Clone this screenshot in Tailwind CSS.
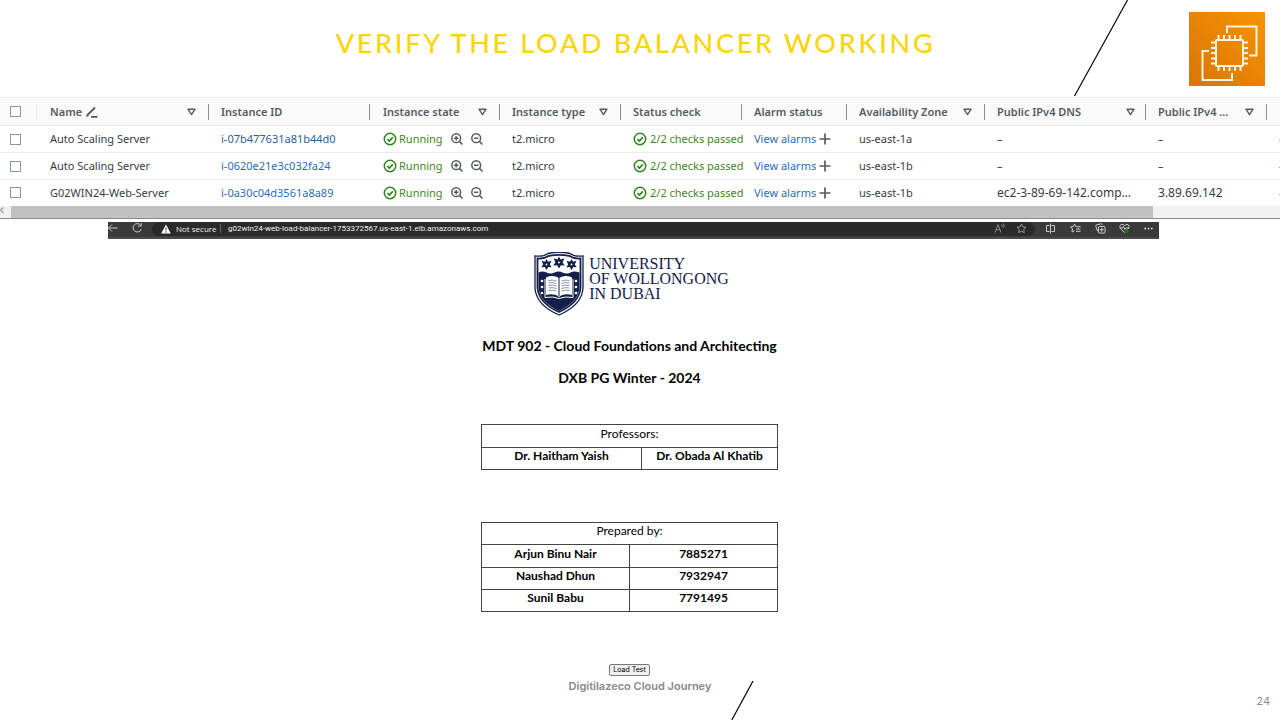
<!DOCTYPE html>
<html lang="en">
<head>
<meta charset="utf-8">
<meta name="viewport" content="width=device-width, initial-scale=1">
<title>Verify the load balancer working</title>
<script src="https://cdn.jsdelivr.net/npm/@tailwindcss/browser@4"></script>
</head>
<body class="relative flex min-h-screen flex-col overflow-x-hidden bg-white font-['Lato',sans-serif] text-black">

<svg width="0" height="0" class="absolute" aria-hidden="true">
  <defs>
    <symbol id="ok" viewBox="0 0 14 14"><circle cx="7" cy="7" r="5.7" fill="none" stroke="#2b8518" stroke-width="1.5"/><path d="M4.4 7.1l2 1.9 3.4-3.6" fill="none" stroke="#2b8518" stroke-width="1.6"/></symbol>
    <symbol id="zin" viewBox="0 0 12 12"><circle cx="5.2" cy="5.2" r="4.4" fill="none" stroke="#545b64" stroke-width="1.5"/><path d="M8.4 8.4l3.1 3.1M3 5.2h4.4M5.2 3v4.4" stroke="#545b64" stroke-width="1.5"/></symbol>
    <symbol id="zout" viewBox="0 0 12 12"><circle cx="5.2" cy="5.2" r="4.4" fill="none" stroke="#545b64" stroke-width="1.5"/><path d="M8.4 8.4l3.1 3.1M3 5.2h4.4" stroke="#545b64" stroke-width="1.5"/></symbol>
    <symbol id="plus" viewBox="0 0 12 12"><path d="M6 .5v11M.5 6h11" stroke="#545b64" stroke-width="1.7"/></symbol>
    <symbol id="tri" viewBox="0 0 9 8"><path d="M1 1.2h7L4.500 6.600z" fill="none" stroke="#545b64" stroke-width="1.4" stroke-linejoin="round"/></symbol>
    <symbol id="leaf" viewBox="-5 -5 10 10"><path d="M0-5l1.300 2.400L4.500-3.500 3 0l1.800 2.500-3.200-.2L0 5l-1.600-2.700-3.200.2L-3 0l-1.500-3.500 3.200.9z" fill="#14204a"/><circle r=".8" fill="#fff"/></symbol>
  </defs>
</svg>

<header class="grid h-[97px] grid-cols-[1fr_auto_1fr] items-start pr-[9px] pt-3">
  <span></span>
  <h1 class="pt-[13px] text-[27px] leading-9 font-medium tracking-widest text-[#fbd50b]">VERIFY THE LOAD BALANCER WORKING</h1>
  <svg class="mr-[6px] h-[74px] w-[76px] justify-self-end" viewBox="0 0 76 74" role="img" aria-label="Amazon EC2">
    <defs><linearGradient id="og" x1="0" y1="1" x2="1" y2="0"><stop offset="0" stop-color="#d87508"/><stop offset="1" stop-color="#f79400"/></linearGradient></defs>
    <rect width="76" height="74" fill="url(#og)"/>
    <g fill="none" stroke="#fff3df" stroke-width="2">
      <rect x="27" y="28" width="27" height="26" rx="1"/>
      <path d="M29.500 28v-5M35 28v-5M40.500 28v-5M46 28v-5M51.500 28v-5M29.500 54v5M35 54v5M40.500 54v5M46 54v5M51.500 54v5M27 30.500h-5M27 36h-5M27 41h-5M27 46.500h-5M27 51.500h-5M54 30.500h5M54 36h5M54 41h5M54 46.500h5M54 51.500h5"/>
      <path d="M38 21v-6.500h29.500V43.500H60M20 39h-6.500v29H43V61"/>
    </g>
  </svg>
</header>
<svg class="absolute left-[1074px] top-0 h-24 w-[54px]" viewBox="0 0 54 96" aria-hidden="true"><path d="M53.500 0L.5 96" stroke="#000" stroke-width="1.200"/></svg>

<section class="overflow-hidden border-b border-[#8a8a8a]">
  <table class="w-full table-fixed border-collapse text-left text-[11px] leading-4 text-[#363c44] font-['Noto_Sans',sans-serif]">
    <colgroup>
      <col class="w-[37px]"><col class="w-[172px]"><col class="w-[161px]"><col class="w-[130px]"><col class="w-[121px]"><col class="w-[121px]"><col class="w-[105px]"><col class="w-[138px]"><col class="w-[161px]"><col class="w-[121px]"><col>
    </colgroup>
    <thead>
      <tr class="h-7 border-y border-[#eaeded] bg-[#fafafa] text-[#545b64]">
        <th class="p-0"><div class="flex h-4 items-center border-r border-[#eaeded] pl-[10px]"><input type="checkbox" aria-label="Select all" class="size-[11px] appearance-none border border-[#8d959d] bg-white"></div></th>
        <th class="p-0 font-semibold"><div class="flex h-4 items-center border-r border-[#8a9096] pl-[13px] pr-3">Name<svg class="ml-1 size-3" viewBox="0 0 12 12"><path d="M1 9.500L9 1.500M5 10.800h6.500" stroke="#545b64" stroke-width="1.800"/><path d="M0 11l1-3 2 2z" fill="#545b64"/></svg><svg class="ml-auto h-2 w-[9px]"><use href="#tri"/></svg></div></th>
        <th class="p-0 font-semibold"><div class="flex h-4 items-center border-r border-[#8a9096] pl-3">Instance ID</div></th>
        <th class="p-0 font-semibold"><div class="flex h-4 items-center justify-between border-r border-[#8a9096] pl-[13px] pr-3">Instance state<svg class="h-2 w-[9px]"><use href="#tri"/></svg></div></th>
        <th class="p-0 font-semibold"><div class="flex h-4 items-center justify-between border-r border-[#8a9096] pl-3 pr-3">Instance type<svg class="h-2 w-[9px]"><use href="#tri"/></svg></div></th>
        <th class="p-0 font-semibold"><div class="flex h-4 items-center border-r border-[#8a9096] pl-3">Status check</div></th>
        <th class="p-0 font-semibold"><div class="flex h-4 items-center border-r border-[#8a9096] pl-3">Alarm status</div></th>
        <th class="p-0 font-semibold"><div class="flex h-4 items-center justify-between whitespace-nowrap border-r border-[#8a9096] pl-3 pr-3">Availability Zone<svg class="h-2 w-[9px]"><use href="#tri"/></svg></div></th>
        <th class="p-0 font-semibold"><div class="flex h-4 items-center justify-between border-r border-[#8a9096] pl-3 pr-[10px]">Public IPv4 DNS<svg class="h-2 w-[9px]"><use href="#tri"/></svg></div></th>
        <th class="p-0 font-semibold"><div class="flex h-4 items-center justify-between border-r border-[#8a9096] pl-3 pr-3">Public IPv4 ...<svg class="h-2 w-[9px]"><use href="#tri"/></svg></div></th>
        <th class="p-0"></th>
      </tr>
    </thead>
    <tbody>
      <tr class="h-[27px] border-b border-[#eaeded]">
        <td class="p-0 pl-[10px]"><input type="checkbox" aria-label="Select i-07b477631a81b44d0" class="block size-[11px] appearance-none border border-[#8d959d]"></td>
        <td class="p-0 pl-[13px]">Auto Scaling Server</td>
        <td class="p-0 pl-3"><a href="#" class="text-[#2a5f94]">i-07b477631a81b44d0</a></td>
        <td class="p-0 pl-[13px]"><div class="flex items-center text-[#3f8624]"><svg class="mr-0.5 size-[14px]"><use href="#ok"/></svg><span class="w-[52px]">Running</span><button type="button" aria-label="Filter in" class="mr-2"><svg class="block size-3"><use href="#zin"/></svg></button><button type="button" aria-label="Filter out"><svg class="block size-3"><use href="#zout"/></svg></button></div></td>
        <td class="p-0 pl-3">t2.micro</td>
        <td class="p-0 pl-3"><div class="flex items-center whitespace-nowrap text-[#3f8624]"><svg class="mr-[3px] size-[14px] shrink-0"><use href="#ok"/></svg>2/2 checks passed</div></td>
        <td class="p-0 pl-3"><div class="flex items-center whitespace-nowrap"><a href="#" class="mr-[3px] text-[#2b6cb5]">View alarms</a><button type="button" aria-label="Create alarm"><svg class="block size-3"><use href="#plus"/></svg></button></div></td>
        <td class="p-0 pl-3">us-east-1a</td><td class="p-0 pl-3">–</td><td class="p-0 pl-3">–</td><td class="overflow-hidden p-0 pl-3">–</td>
      </tr>
      <tr class="h-[27px] border-b border-[#eaeded]">
        <td class="p-0 pl-[10px]"><input type="checkbox" aria-label="Select i-0620e21e3c032fa24" class="block size-[11px] appearance-none border border-[#8d959d]"></td>
        <td class="p-0 pl-[13px]">Auto Scaling Server</td>
        <td class="p-0 pl-3"><a href="#" class="text-[#2b6cb5]">i-0620e21e3c032fa24</a></td>
        <td class="p-0 pl-[13px]"><div class="flex items-center text-[#3f8624]"><svg class="mr-0.5 size-[14px]"><use href="#ok"/></svg><span class="w-[52px]">Running</span><button type="button" aria-label="Filter in" class="mr-2"><svg class="block size-3"><use href="#zin"/></svg></button><button type="button" aria-label="Filter out"><svg class="block size-3"><use href="#zout"/></svg></button></div></td>
        <td class="p-0 pl-3">t2.micro</td>
        <td class="p-0 pl-3"><div class="flex items-center whitespace-nowrap text-[#3f8624]"><svg class="mr-[3px] size-[14px] shrink-0"><use href="#ok"/></svg>2/2 checks passed</div></td>
        <td class="p-0 pl-3"><div class="flex items-center whitespace-nowrap"><a href="#" class="mr-[3px] text-[#2b6cb5]">View alarms</a><button type="button" aria-label="Create alarm"><svg class="block size-3"><use href="#plus"/></svg></button></div></td>
        <td class="p-0 pl-3">us-east-1b</td><td class="p-0 pl-3">–</td><td class="p-0 pl-3">–</td><td class="overflow-hidden p-0 pl-3">–</td>
      </tr>
      <tr class="h-[26px]">
        <td class="p-0 pl-[10px]"><input type="checkbox" aria-label="Select i-0a30c04d3561a8a89" class="block size-[11px] appearance-none border border-[#8d959d]"></td>
        <td class="p-0 pl-[13px]">G02WIN24-Web-Server</td>
        <td class="p-0 pl-3"><a href="#" class="text-[#2b6cb5]">i-0a30c04d3561a8a89</a></td>
        <td class="p-0 pl-[13px]"><div class="flex items-center text-[#3f8624]"><svg class="mr-0.5 size-[14px]"><use href="#ok"/></svg><span class="w-[52px]">Running</span><button type="button" aria-label="Filter in" class="mr-2"><svg class="block size-3"><use href="#zin"/></svg></button><button type="button" aria-label="Filter out"><svg class="block size-3"><use href="#zout"/></svg></button></div></td>
        <td class="p-0 pl-3">t2.micro</td>
        <td class="p-0 pl-3"><div class="flex items-center whitespace-nowrap text-[#3f8624]"><svg class="mr-[3px] size-[14px] shrink-0"><use href="#ok"/></svg>2/2 checks passed</div></td>
        <td class="p-0 pl-3"><div class="flex items-center whitespace-nowrap"><a href="#" class="mr-[3px] text-[#2b6cb5]">View alarms</a><button type="button" aria-label="Create alarm"><svg class="block size-3"><use href="#plus"/></svg></button></div></td>
        <td class="p-0 pl-3">us-east-1b</td><td class="whitespace-nowrap p-0 pl-3 text-[12px]">ec2-3-89-69-142.comp…</td><td class="p-0 pl-3 text-[12px]">3.89.69.142</td><td class="overflow-hidden p-0 pl-3">–</td>
      </tr>
    </tbody>
  </table>
  <div class="flex h-3 bg-[#f1f1f1]">
    <svg class="h-[10px] w-[11px]" viewBox="0 0 11 10"><path d="M3.500 1.500L.5 4.200l3 2.800" fill="none" stroke="#9a9a9a" stroke-width="1.300"/></svg>
    <div class="mr-[127px] flex-1 bg-[#c1c1c1]"></div>
  </div>
</section>

<nav class="ml-[108px] mr-[121px] mt-[3px] flex h-[17px] items-start border-b-2 border-[#4a4a4a] bg-[#3a3a3a] text-[8px] leading-3 text-[#f1f1f1]">
  <button type="button" aria-label="Back"><svg class="block h-[13px] w-[10px]" viewBox="0 0 10 13" fill="none" stroke="#c8c8c8"><path d="M9.500 6H.8M4 2.500L.5 6 4 9.500"/></svg></button>
  <button type="button" aria-label="Reload" class="ml-[13px]"><svg class="block h-[13px] w-3" viewBox="0 0 12 13" fill="none" stroke="#c8c8c8"><path d="M9.800 3.500A4.200 4.200 0 1 0 10.300 7M10.200 1v3H7"/></svg></button>
  <div class="ml-[9px] flex h-[14px] flex-1 items-center rounded-full bg-[#2a2a2a] pl-[9px] pr-2">
    <svg class="mr-[5px] size-[10px]" viewBox="0 0 10 10"><path d="M5 .5L9.800 9.500H.2z" fill="#fff"/><path d="M5 3.500v3M5 7.300v1.200" stroke="#2a2a2a"/></svg>
    <span class="w-11 font-['Open_Sans',sans-serif]">Not secure</span><span class="mr-[7px] h-[9px] w-px bg-[#666]"></span><span class="font-['Roboto',sans-serif]">g02win24-web-load-balancer-1753372567.us-east-1.elb.amazonaws.com</span>
    <svg class="ml-auto h-[11px] w-[11px]" viewBox="0 0 11 11" fill="none" stroke="#888"><path d="M1 9.500L4 1.500 7 9.500M2 6.700h4M7.500 1.500q1 1 .6 2.500M9.200.5q1.400 1.700.6 4"/></svg>
    <svg class="ml-[11px] h-[11px] w-[11px]" viewBox="0 0 11 11" fill="none" stroke="#999"><path d="M5.500 1l1.400 2.900 3.100.4-2.300 2.200.6 3.200-2.800-1.600-2.800 1.600.6-3.200L1 4.300l3.100-.4z"/></svg>
  </div>
  <div class="flex items-center pl-[10px] pr-[6px] pt-px">
    <svg class="mr-[14px] size-[11px]" viewBox="0 0 11 11" fill="none" stroke="#ccc"><path d="M4.500 2.500H1.500v6h3M6.500 2.500h3v6h-3M5.500.5v10"/></svg>
    <svg class="mr-[14px] size-[11px]" viewBox="0 0 11 11" fill="none" stroke="#ccc"><path d="M6.500 3.500h-.8L4.500 1 3.300 3.500l-2.800.4 2 2-.5 3.100 2.500-1.300M6.500 3.700H10.500M6 6h4.500M6 8.300h4.500"/></svg>
    <svg class="mr-[13px] size-[11px]" viewBox="0 0 11 11" fill="none" stroke="#ccc"><rect x="3.500" y="3.500" width="6.500" height="6.500" rx="1"/><path d="M6.700 4.800v4M4.800 6.700h4M2.500 8L.8 3.200q-.2-1 .7-1.300L6 .8q1-.2 1.300.8"/></svg>
    <svg class="mr-[14px] size-[11px]" viewBox="0 0 11 11" fill="none" stroke="#ccc"><path d="M5.500 9.500L1.200 5.200Q0 3 2 1.500 4 .8 5.500 2.500 7 .8 9 1.500q2 1.500.8 3.700zM1.500 5h2l1-1.500L6 6.500 7 5h3"/><circle cx="7.500" cy="8" r="2" fill="#127a1d" stroke="none"/></svg>
    <svg class="size-[9px]" viewBox="0 0 9 9" fill="#ddd"><circle cx="1.200" cy="4.500" r=".9"/><circle cx="4.500" cy="4.500" r=".9"/><circle cx="7.800" cy="4.500" r=".9"/></svg>
  </div>
</nav>

<main class="flex flex-col items-center pr-[21px] pt-[13px]">
  <div class="flex items-start gap-[5px] pl-1">
    <svg class="h-16 w-[50px]" viewBox="0 0 50 64" aria-hidden="true">
      <path d="M1 4Q9 5 14 1.500 25-1 36 1.500 41 5 49 4V36Q48 53 25 63 2 53 1 36z" fill="#fff" stroke="#14204a" stroke-width="1.300"/>
      <path d="M3.500 6.500Q10 7 15 3.800 25 1.800 35 3.800 40 7 46.500 6.500V36Q45 51 25 60 5 51 3.500 36z" fill="#fff" stroke="#14204a" stroke-width="1.800"/>
      <path d="M4.500 20.500q4-2 8 0t8 0 8 0 8 0 9 0V36Q44 50 25 59 6 50 4.500 36z" fill="#14204a"/>
      <use href="#leaf" x="7" y="7" width="11" height="11"/><use href="#leaf" x="19" y="4.500" width="12" height="12"/><use href="#leaf" x="32" y="7" width="11" height="11"/>
      <path d="M12 25.500q7-3 13 .5 6-3.500 13-.5V43q-7-2-13 1.500Q19 41 12 43z" fill="#fff"/>
      <path d="M11 27v18.500q8-1.500 14 1 6-2.500 14-1V27M25 26v19" fill="none" stroke="#fff" stroke-width="1"/><path d="M25 26v18" stroke="#14204a"/>
      <path d="M14.500 28.500q4-1 8 .5m-8 2q4-1 8 .5m-8 2q4-1 8 .5m-8 2q4-1 8 .5m-8 2q4-1 8 .5M27.500 29q4-1.500 8-.5m-8 3q4-1.500 8-.5m-8 3q4-1.500 8-.5m-8 3q4-1.500 8-.5m-8 3q4-1.500 8-.5" fill="none" stroke="#8088a0" stroke-width=".9"/>
      <g fill="#fff"><circle cx="8" cy="29" r="1.300"/><circle cx="8" cy="35" r="1.300"/><circle cx="8" cy="41" r="1.300"/><circle cx="42" cy="29" r="1.300"/><circle cx="42" cy="35" r="1.300"/><circle cx="42" cy="41" r="1.300"/></g>
    </svg>
    <p class="pt-1 font-['Liberation_Serif',serif] text-[16px] leading-[15px] text-[#14204a]">UNIVERSITY<br>OF WOLLONGONG<br>IN DUBAI</p>
  </div>
  <h2 class="mt-5 text-[14px] leading-5 font-bold">MDT 902 - Cloud Foundations and Architecting</h2>
  <h2 class="mt-3 text-[14px] leading-5 font-bold">DXB PG Winter - 2024</h2>

  <table class="mt-9 w-[297px] table-fixed border-collapse text-center text-[12px] leading-4">
    <colgroup><col class="w-[160px]"><col></colgroup>
    <tr class="h-[23px]"><th colspan="2" class="border border-[#444] p-0 pb-1 font-normal">Professors:</th></tr>
    <tr class="h-[22px]"><td class="border border-[#444] p-0 pb-1 font-bold">Dr. Haitham Yaish</td><td class="border border-[#444] p-0 pb-1 font-bold">Dr. Obada Al Khatib</td></tr>
  </table>

  <table class="mt-[52px] w-[297px] table-fixed border-collapse text-center text-[12px] leading-4">
    <tr class="h-[22px]"><th colspan="2" class="border border-[#444] p-0 pb-1 font-normal">Prepared by:</th></tr>
    <tr class="h-[23px]"><td class="border border-[#444] p-0 pb-1 font-bold">Arjun Binu Nair</td><td class="border border-[#444] p-0 pb-1 font-bold">7885271</td></tr>
    <tr class="h-[22px]"><td class="border border-[#444] p-0 pb-1 font-bold">Naushad Dhun</td><td class="border border-[#444] p-0 pb-1 font-bold">7932947</td></tr>
    <tr class="h-[22px]"><td class="border border-[#444] p-0 pb-1 font-bold">Sunil Babu</td><td class="border border-[#444] p-0 pb-1 font-bold">7791495</td></tr>
  </table>

  <button type="button" class="mt-[52px] h-3 rounded-xs border border-[#777] bg-[#efefef] px-[3px] text-[7px] leading-[10px] font-['Inter',sans-serif]">Load Test</button>
</main>

<footer class="grid grid-cols-[1fr_auto_1fr] items-start pt-0.5 font-['Inter',sans-serif] text-[11px] leading-4 text-[#898989]">
  <span></span>
  <p class="font-semibold">Digitilazeco Cloud Journey</p>
  <span class="justify-self-end pr-[10px] pt-[15px]">24</span>
</footer>
<svg class="absolute left-[731px] top-[681px] h-[39px] w-[23px]" viewBox="0 0 23 39" aria-hidden="true"><path d="M22 0L.8 39" stroke="#000" stroke-width="1.200"/></svg>
</body>
</html>
